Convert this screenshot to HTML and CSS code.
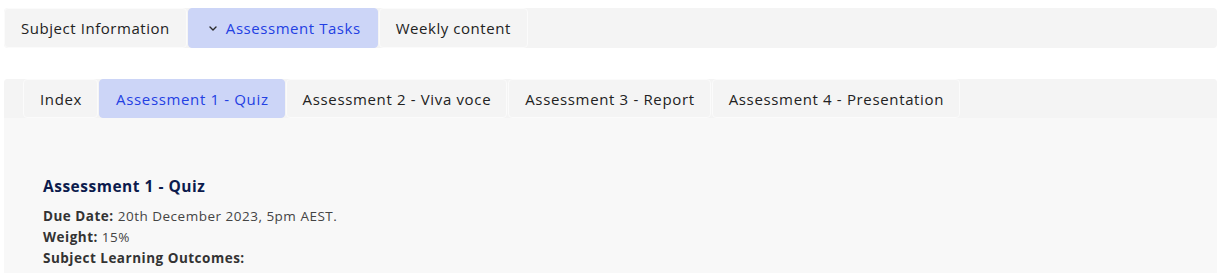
FILE: index.html
```html
<!DOCTYPE html>
<html lang="en">
<head>
<meta charset="utf-8">
<title>Assessment Tasks</title>
<link rel="stylesheet" href="styles.css">
</head>
<body>
<div class="page">
  <nav class="tabbar top">
    <a class="tab">Subject Information</a>
    <a class="tab active"><svg class="chev" width="8" height="5" viewBox="0 0 8 5"><polyline points="1,1 4,4 7,1" fill="none" stroke="#2a2a2a" stroke-width="1.4" stroke-linecap="round" stroke-linejoin="round"/></svg>Assessment Tasks</a>
    <a class="tab">Weekly content</a>
  </nav>
  <section class="panel">
    <nav class="tabbar sub">
      <a class="tab">Index</a>
      <a class="tab active">Assessment 1 - Quiz</a>
      <a class="tab">Assessment 2 - Viva voce</a>
      <a class="tab">Assessment 3 - Report</a>
      <a class="tab">Assessment 4 - Presentation</a>
    </nav>
    <div class="content">
      <h2 class="title">Assessment 1 - Quiz</h2>
      <p class="line"><b>Due Date:</b> 20th December 2023, 5pm AEST.</p>
      <p class="line"><b>Weight:</b> 15%</p>
      <p class="line"><b>Subject Learning Outcomes:</b></p>
    </div>
  </section>
</div>
</body>
</html>
```
FILE: styles.css
```css
* { box-sizing: border-box; }
html, body { margin: 0; padding: 0; background: #ffffff; }
body {
  font-family: "Open Sans", "Noto Sans", sans-serif;
  color: #222;
}
.page {
  padding: 8px 12px 0 4px;
  display: flex;
  flex-direction: column;
  gap: 31px;
}
.tabbar {
  display: flex;
  background: #f4f4f4;
  border-radius: 4px;
}
.tabbar.top { height: 40px; }
.tabbar.sub { height: 39px; padding-left: 19px; border-radius: 4px 4px 0 0; }
.tab {
  display: flex;
  align-items: center;
  padding: 0 16px;
  font-size: 15px;
  letter-spacing: 0.55px;
  color: #222;
  border: 1px solid #fbfbfb;
  border-radius: 4px;
  margin-right: 1px;
  white-space: nowrap;
  cursor: pointer;
}
.sub .tab { letter-spacing: 0.65px; padding: 0 15px 0 16px; }
.tab.active {
  background: #ccd5f7;
  color: #2340e3;
  border-color: #ccd5f7;
}
.top .tab.active { padding-left: 20px; }
.chev {
  display: block;
  margin-right: 9px;
  margin-top: 1px;
}
.panel {
  background: #f8f8f8;
  border-radius: 4px 4px 0 0;
  min-height: 200px;
}
.content { padding: 58px 39px 0; }
.title {
  margin: 0 0 10px;
  font-size: 15.5px;
  letter-spacing: 0.5px;
  font-weight: 700;
  color: #0c1b4d;
  line-height: 20px;
}
.line {
  margin: 0;
  font-size: 13.5px;
  letter-spacing: 0.5px;
  line-height: 21px;
  color: #444;
}
.line b { font-weight: 700; color: #333; }
```
